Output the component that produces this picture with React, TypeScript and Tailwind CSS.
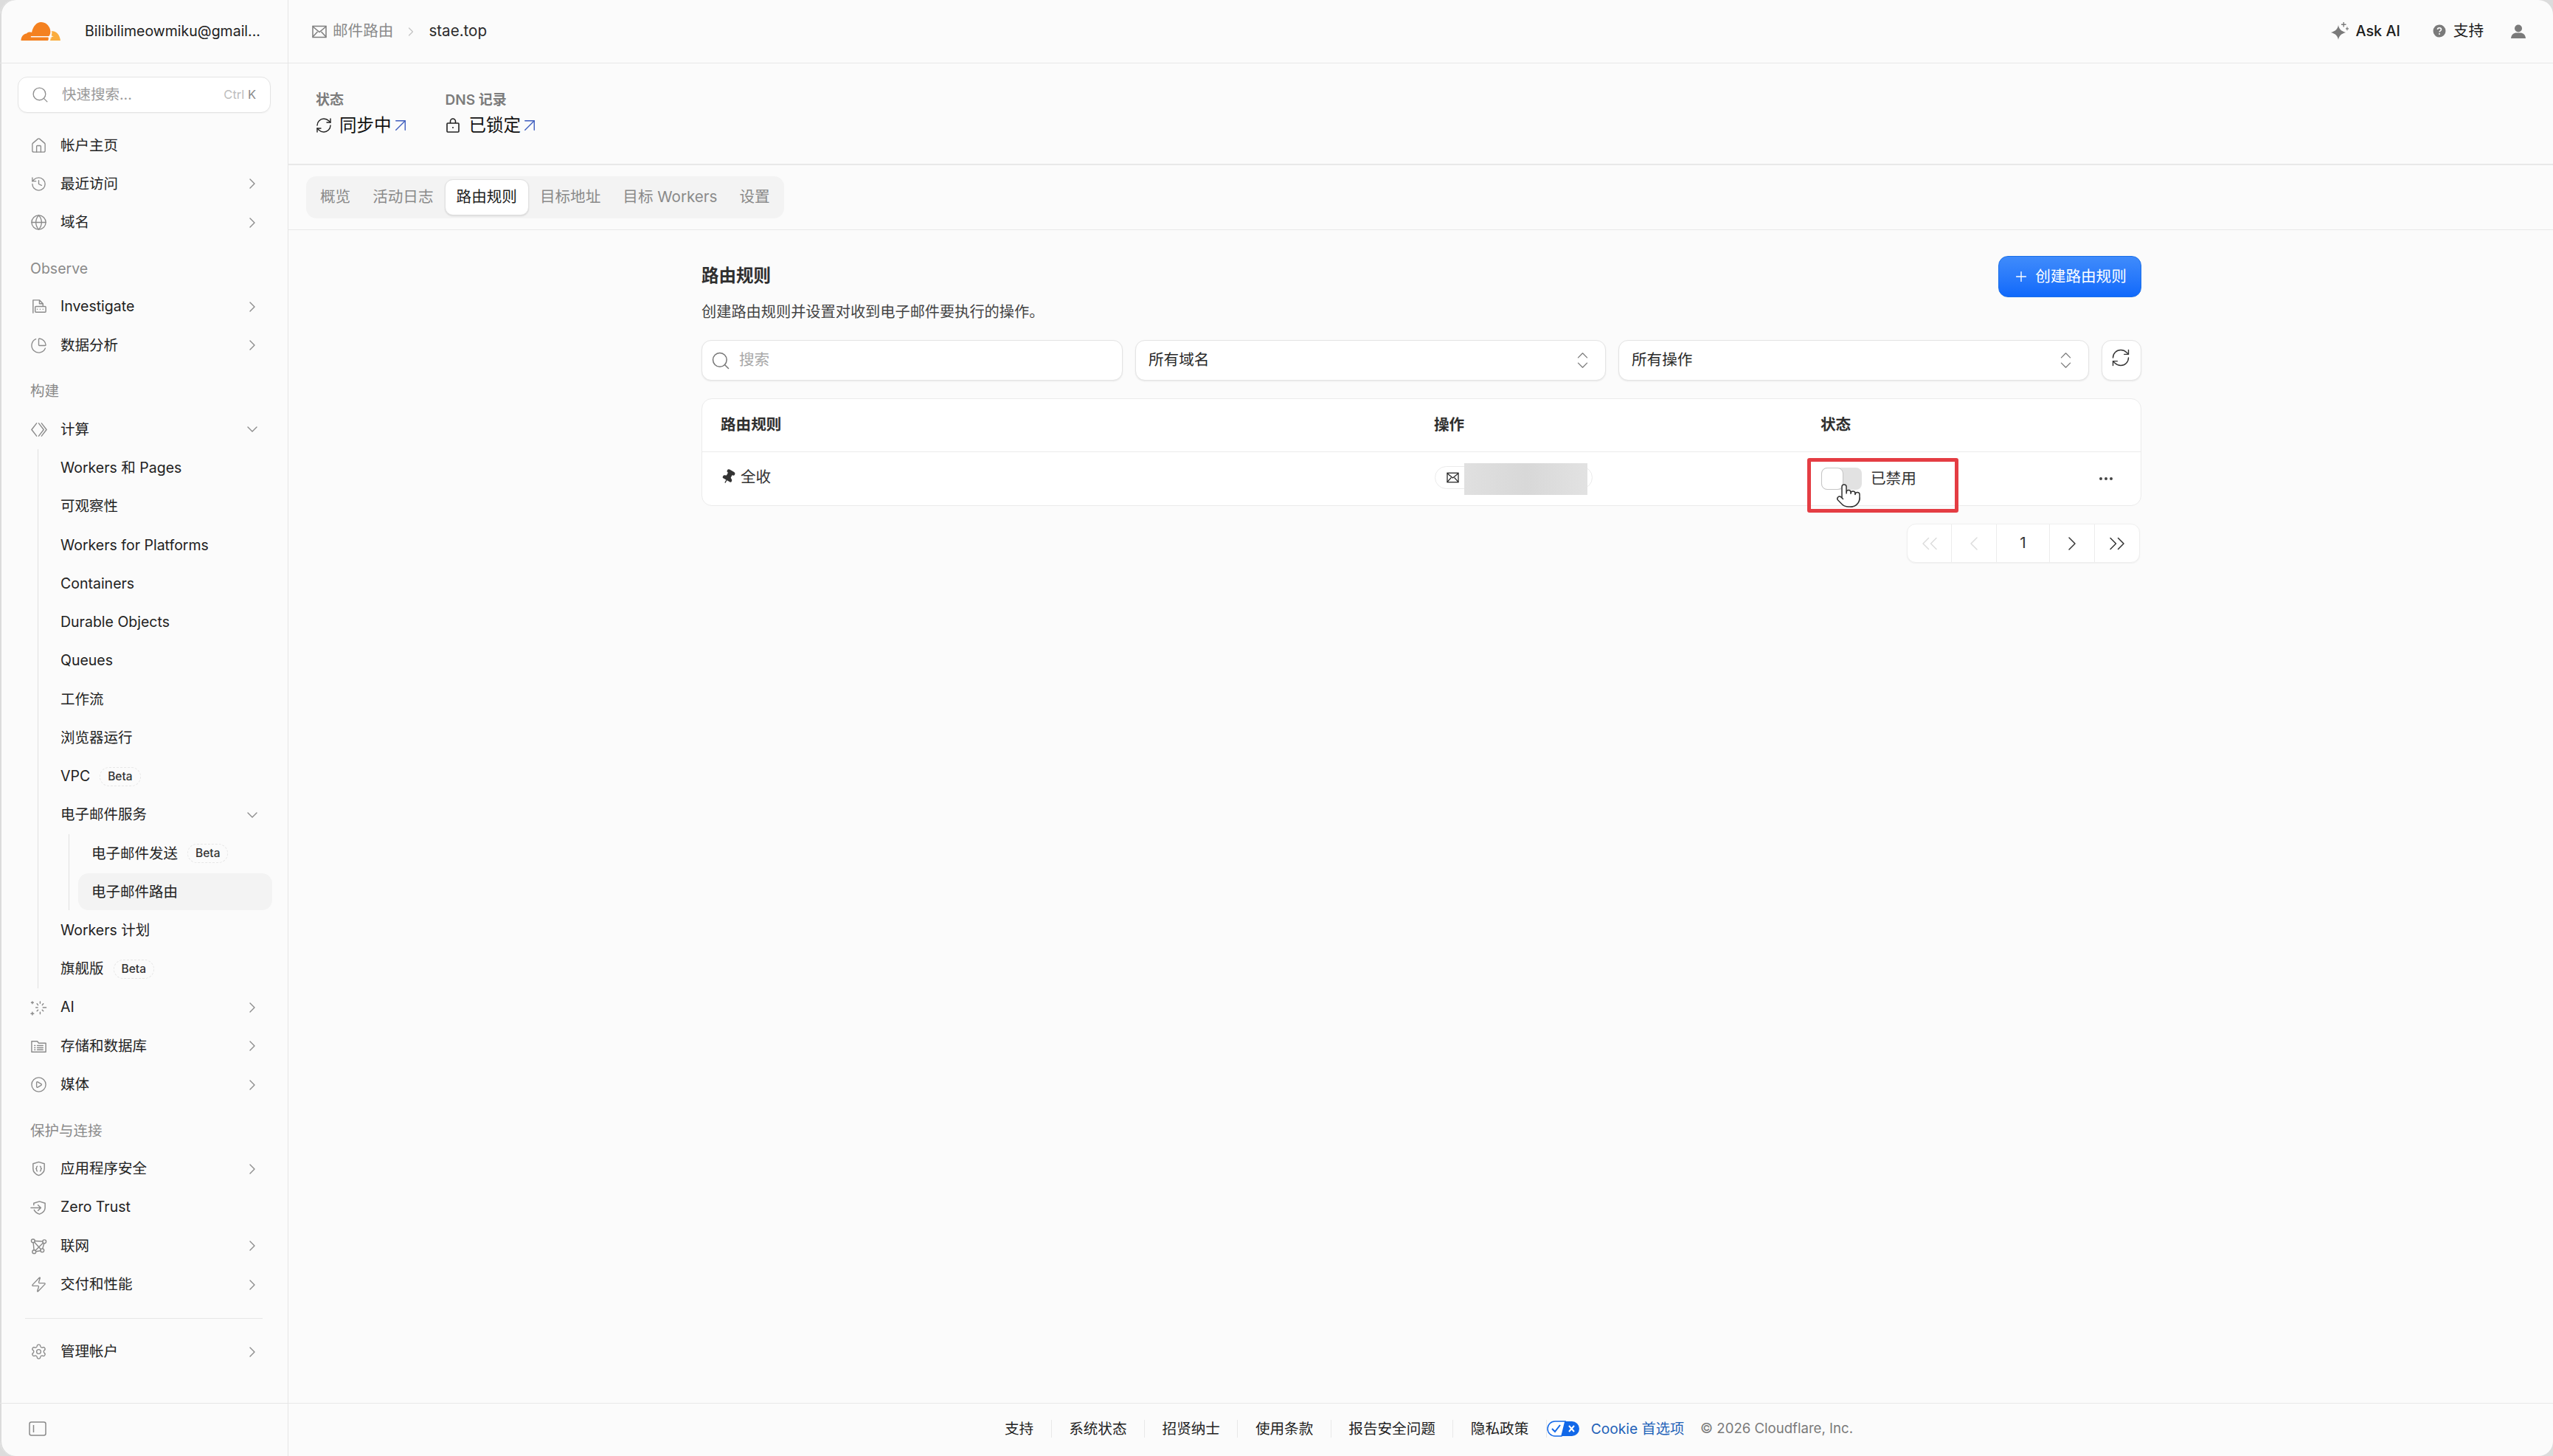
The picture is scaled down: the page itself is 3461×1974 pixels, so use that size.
import type { ReactNode } from "react";
import {
  ChevronDown,
  ChevronLeft,
  ChevronRight,
  ChevronsLeft,
  ChevronsRight,
  ChevronsUpDown,
  ChartPie,
  CirclePlay,
  Ellipsis,
  Globe,
  History,
  Home,
  Pin,
  Plus,
  Pointer,
  RefreshCw,
  Search,
  Settings,
  ArrowUpRight,
  Zap,
} from "lucide-react";

type IconProps = { className?: string; strokeWidth?: number };

function Svg({ className, children }: IconProps & { children: ReactNode }) {
  return (
    <svg
      viewBox="0 0 24 24"
      fill="none"
      stroke="currentColor"
      strokeWidth="1.5"
      strokeLinecap="round"
      strokeLinejoin="round"
      className={className}
    >
      {children}
    </svg>
  );
}

const DocIcon = ({ className }: IconProps) => (
  <Svg className={className}>
    <path d="M4 21V3h9l5 5v3M13 3v5h5" />
    <rect x="7" y="12" width="15" height="8" rx="1" />
    <path d="M10 16h.01M14 16h.01M18 16h.01" />
  </Svg>
);
const ComputeIcon = ({ className }: IconProps) => (
  <Svg className={className}>
    <path d="M9 3 2 12l7 9M12 3l7 9-7 9M16 3l7 9-7 9" />
  </Svg>
);
const AiIcon = ({ className }: IconProps) => (
  <Svg className={className}>
    <path d="M3 3v3M1.500 4.500h3M3 18v4M1 20h4M14 3v2.500M14 18v2.500M8 11.500h2.500M18 11.500h4.500M9.500 6l1.500 2M18.500 6 17 8M9.500 16.500 11 15M18.500 16.500 17 15" />
  </Svg>
);
const StorageIcon = ({ className }: IconProps) => (
  <Svg className={className}>
    <path d="M2 5h8l2 2.500h10V20H2z" />
    <path d="M6 11h1M6 14h1M6 17h1M10 11h8M10 14h8M10 17h8" />
  </Svg>
);
const ShieldCodeIcon = ({ className }: IconProps) => (
  <Svg className={className}>
    <path d="M12 2.500 20 5v7c0 5-4 8-8 9.500C8 20 4 17 4 12V5z" />
    <path d="M10 8.500c-1 0-1 1-1 2s-.5 1.500-1 1.500c.5 0 1 .5 1 1.500s0 2 1 2M14 8.500c1 0 1 1 1 2s.5 1.500 1 1.500c-.5 0-1 .5-1 1.500s0 2-1 2" />
  </Svg>
);
const ShieldArrowIcon = ({ className }: IconProps) => (
  <Svg className={className}>
    <path d="M5 8V5.500L13 3l8 2.500V12c0 5-4 7.500-8 9-3-1-6-3-7.500-6" />
    <path d="M1 12h14M11 8l4 4-4 4" />
  </Svg>
);
const NetworkIcon = ({ className }: IconProps) => (
  <Svg className={className}>
    <circle cx="4" cy="4.500" r="2.500" />
    <circle cx="20" cy="5.500" r="2.500" />
    <circle cx="5.500" cy="20" r="2.500" />
    <circle cx="17" cy="18" r="2.500" />
    <path d="M6.500 4.700 17.500 5.300M4.300 7l1 10.500M19.500 8 17.500 15.500M8 19.500l6.500-1M6 6.500l9 10M18 7.500 7.500 18" />
  </Svg>
);
const CollapseIcon = ({ className }: IconProps) => (
  <svg viewBox="0 0 24 20" fill="none" stroke="currentColor" strokeWidth="1.500" className={className}>
    <rect x="1" y="1" width="22" height="18" rx="2.500" />
    <path d="M6.500 5v10" />
  </svg>
);
const MailIcon = ({ className }: IconProps) => (
  <svg viewBox="0 0 20 18" fill="none" stroke="currentColor" strokeWidth="1.500" className={className}>
    <rect x="1" y="1.500" width="18" height="15" />
    <path d="m1 2 9 7.500L19 2M1 16l6.500-7M19 16l-6.500-7" />
  </svg>
);
const LockIcon = ({ className }: IconProps) => (
  <svg viewBox="0 0 18 20" fill="none" stroke="currentColor" strokeWidth="1.600" className={className}>
    <rect x="1" y="7" width="16" height="12" rx="1" />
    <path d="M5.500 7V4.500a3.500 3.500 0 0 1 7 0V7" />
    <circle cx="9" cy="13" r="1" fill="currentColor" stroke="none" />
  </svg>
);
const SparkIcon = ({ className }: IconProps) => (
  <svg viewBox="0 0 24 24" fill="currentColor" className={className}>
    <path d="M10 4C11 9.500 13.500 12 20 14 13.500 16 11 18.500 10 24 9 18.500 6.500 16 0 14 6.500 12 9 9.500 10 4z" />
    <path d="M16.500 0h1.400v2.600h2.600V4h-2.600v2.600h-1.400V4H14V2.600h2.500zM21.400 6.500h1.100v1.800H24v1.100h-1.500v1.800h-1.100V9.400H20V8.300h1.400z" />
  </svg>
);
const HelpIcon = ({ className }: IconProps) => (
  <svg viewBox="0 0 18 18" className={className}>
    <circle cx="9" cy="9" r="8.500" fill="currentColor" />
    <path d="M6.500 7c0-1.500 1.100-2.300 2.500-2.300S11.500 5.500 11.500 7c0 1.800-2.500 1.800-2.500 3.500" fill="none" stroke="#fff" strokeWidth="1.600" />
    <circle cx="9" cy="13" r="1" fill="#fff" />
  </svg>
);
const UserIcon = ({ className }: IconProps) => (
  <svg viewBox="0 0 20 19" fill="currentColor" className={className}>
    <circle cx="10" cy="5.500" r="5" />
    <path d="M0 19c.5-5 3.500-7 6.500-7.500h7c3 .5 6 2.500 6.500 7.500z" />
  </svg>
);

function CloudflareLogo() {
  return (
    <svg viewBox="0 0 54 25" className="h-[25px] w-[54px] shrink-0">
      <path
        fill="#f48120"
        d="M.5 25C.5 20 3.500 16 8 15.500c1.500-2 4.500-2.500 7-1.500C17 5 22 0 27.500 0 33.500 0 38.500 4 40 10c1 4 0 7-1.500 9H14q-.5 1 0 1.500h23.500q1 2.500-.5 4.500z"
      />
      <path fill="#faad3f" d="M40 25q1-3 .5-4.500L42 17q1-4-.5-4.500C47 11 53 16 54 25z" />
      <path fill="#fff" d="m41 15.500.8 3 3 .7-3 .8-.8 3-.8-3-3-.8 3-.7z" />
    </svg>
  );
}

function NavRow({
  icon: Icon,
  label,
  arrow,
  children,
}: {
  icon?: (p: IconProps) => ReactNode;
  label: string;
  arrow?: "right" | "down";
  children?: ReactNode;
}) {
  return (
    <div className={`flex h-[52.25px] items-center text-[19.5px] text-[#222] ${Icon ? "pl-[40px]" : ""} pr-[36px]`}>
      {Icon && (
        <span className="mr-[18px] flex w-[24px] shrink-0 justify-center text-[#8b8b8b]">
          <Icon strokeWidth={1.4} className="h-[23px] w-[23px]" />
        </span>
      )}
      <span>{label}</span>
      {children}
      {arrow === "right" && <ChevronRight strokeWidth={1.4} className="ml-auto h-[24px] w-[24px] text-[#8b8b8b]" />}
      {arrow === "down" && <ChevronDown strokeWidth={1.4} className="ml-auto h-[24px] w-[24px] text-[#8b8b8b]" />}
    </div>
  );
}

function Beta() {
  return (
    <span className="ml-[13px] rounded-full border border-dashed border-[#e6e6e6] px-[10px] text-[15.5px] leading-[24px] font-medium text-[#333]">
      Beta
    </span>
  );
}

function SectionLabel({ children }: { children: string }) {
  return <div className="flex h-[62px] items-end pb-[14px] pl-[41px] text-[19.5px] leading-[24px] text-[#8a8a8a]">{children}</div>;
}

function Sidebar() {
  return (
    <aside className="flex w-[391px] shrink-0 flex-col border-r border-[#e6e6e6]">
      <div className="flex h-[86px] shrink-0 items-center border-b border-[#e6e6e6] pl-[28px]">
        <CloudflareLogo />
        <span className="ml-[33px] text-[19.5px] whitespace-nowrap text-[#222]">Bilibilimeowmiku@gmail...</span>
      </div>
      <div className="mt-[18px] mr-[23px] ml-[24px] flex h-[49px] shrink-0 items-center rounded-[13px] border border-[#e4e4e4] bg-white pr-[19px] pl-[17px] shadow-[0_1px_2px_rgba(0,0,0,0.04)]">
        <Search strokeWidth={1.3} className="h-[25px] w-[25px] text-[#8f8f8f]" />
        <span className="ml-[17px] text-[19.5px] text-[#9a9a9a]">快速搜索...</span>
        <span className="ml-auto text-[16.5px] text-[#bdbdbd]">
          Ctrl <span className="text-[#8a8a8a]">K</span>
        </span>
      </div>
      <nav className="mt-[18px]">
        <NavRow icon={Home} label="帐户主页" />
        <NavRow icon={History} label="最近访问" arrow="right" />
        <NavRow icon={Globe} label="域名" arrow="right" />
        <SectionLabel>Observe</SectionLabel>
        <NavRow icon={DocIcon} label="Investigate" arrow="right" />
        <NavRow icon={ChartPie} label="数据分析" arrow="right" />
        <SectionLabel>构建</SectionLabel>
        <NavRow icon={ComputeIcon} label="计算" arrow="down" />
        <div className="ml-[51px] border-l border-[#e0e0e0] pl-[30px]">
          <NavRow label="Workers 和 Pages" />
          <NavRow label="可观察性" />
          <NavRow label="Workers for Platforms" />
          <NavRow label="Containers" />
          <NavRow label="Durable Objects" />
          <NavRow label="Queues" />
          <NavRow label="工作流" />
          <NavRow label="浏览器运行" />
          <NavRow label="VPC">
            <Beta />
          </NavRow>
          <NavRow label="电子邮件服务" arrow="down" />
          <div className="mr-[21px] ml-[11px] border-l border-[#e0e0e0] pl-[12px]">
            <div className="flex h-[52.25px] items-center pl-[18px] text-[19.5px] text-[#222]">
              电子邮件发送
              <Beta />
            </div>
            <div className="my-[1.1px] flex h-[50px] items-center rounded-[14px] bg-[#f3f3f3] pl-[18px] text-[19.5px] text-[#222]">
              电子邮件路由
            </div>
          </div>
          <NavRow label="Workers 计划" />
          <NavRow label="旗舰版">
            <Beta />
          </NavRow>
        </div>
        <NavRow icon={AiIcon} label="AI" arrow="right" />
        <NavRow icon={StorageIcon} label="存储和数据库" arrow="right" />
        <NavRow icon={CirclePlay} label="媒体" arrow="right" />
        <SectionLabel>保护与连接</SectionLabel>
        <NavRow icon={ShieldCodeIcon} label="应用程序安全" arrow="right" />
        <NavRow icon={ShieldArrowIcon} label="Zero Trust" />
        <NavRow icon={NetworkIcon} label="联网" arrow="right" />
        <NavRow icon={Zap} label="交付和性能" arrow="right" />
      </nav>
      <div className="mx-[34px] mt-[19px] mb-[19px] border-t border-[#e6e6e6]" />
      <NavRow icon={Settings} label="管理帐户" arrow="right" />
      <div className="mt-auto flex h-[72px] items-center border-t border-[#e6e6e6] pb-[3px] pl-[39px] text-[#8a8a8a]">
        <CollapseIcon className="h-[20px] w-[24px]" />
      </div>
    </aside>
  );
}

function TopBar() {
  return (
    <header className="flex h-[86px] shrink-0 items-center border-b border-[#e8e8e8] pr-[37px] pl-[32px] text-[20.6px]">
      <MailIcon className="h-[18px] w-[20px] text-[#7d7d7d]" />
      <span className="ml-[8px] text-[#8a8a8a]">邮件路由</span>
      <ChevronRight strokeWidth={1.5} className="mx-[14px] h-[20px] w-[20px] text-[#c4c4c4]" />
      <span className="text-[#2a2a2a]">stae.top</span>
      <div className="ml-auto flex items-center text-[#1d1d1d]">
        <SparkIcon className="h-[24px] w-[24px] text-[#7a7a7a]" />
        <span className="ml-[9px] text-[19.8px] font-medium">Ask AI</span>
        <HelpIcon className="ml-[44px] h-[18px] w-[18px] text-[#7a7a7a]" />
        <span className="ml-[10px]">支持</span>
        <UserIcon className="ml-[37px] h-[19px] w-[20px] text-[#7a7a7a]" />
      </div>
    </header>
  );
}

function Stat({ label, value, icon }: { label: string; value: string; icon: ReactNode }) {
  return (
    <div>
      <div className="text-[19px] leading-[28px] font-semibold text-[#7c7c7c]">{label}</div>
      <div className="mt-[4px] flex h-[32px] items-center text-[23.5px] text-[#111]">
        {icon}
        <span>{value}</span>
        <ArrowUpRight strokeWidth={1.1} className="ml-[-3px] h-[30px] w-[30px] text-[#3b5bbd]" />
      </div>
    </div>
  );
}

const tabs = ["概览", "活动日志", "路由规则", "目标地址", "目标 Workers", "设置"];

function Tabs() {
  return (
    <div className="flex h-[88px] shrink-0 items-center border-b border-[#e8e8e8] pl-[24px]">
      <div className="flex h-[57px] items-center rounded-[14px] bg-[#f3f3f3] px-[4px] text-[20.6px]">
        {tabs.map((t) =>
          t === "路由规则" ? (
            <span
              key={t}
              className="flex h-[49px] items-center rounded-[11px] border border-[#e2e2e2] bg-white px-[15px] text-[#1d1d1d] shadow-[0_1px_2px_rgba(0,0,0,0.12)]"
            >
              {t}
            </span>
          ) : (
            <span key={t} className="px-[15px] text-[#8a8a8a]">
              {t}
            </span>
          ),
        )}
      </div>
    </div>
  );
}

function Select({ label }: { label: string }) {
  return (
    <div className="flex flex-1 items-center justify-between rounded-[13px] border border-[#e4e4e4] bg-white pr-[16px] pl-[17px] text-[20.6px] text-[#2a2a2a] shadow-[0_1px_2px_rgba(0,0,0,0.08)]">
      {label}
      <ChevronsUpDown strokeWidth={1.1} className="h-[29px] w-[29px] text-[#7d7d7d]" />
    </div>
  );
}

function RulesTable() {
  return (
    <div className="mt-[24px] rounded-[14px] border border-[#ebebeb] bg-white text-[20.6px]">
      <div className="grid h-[72px] grid-cols-[967px_524px_1fr] items-center border-b border-[#ebebeb] font-semibold text-[#2f2f2f]">
        <span className="pl-[25px]">路由规则</span>
        <span className="pl-[25px]">操作</span>
        <span className="pl-[25px]">状态</span>
      </div>
      <div className="grid h-[72px] grid-cols-[967px_524px_1fr] items-center text-[#333]">
        <div className="mb-[4px] flex items-center pl-[25px]">
          <Pin strokeWidth={1.5} className="h-[21px] w-[21px] rotate-[30deg] fill-[#333] text-[#333]" />
          <span className="ml-[6px]">全收</span>
        </div>
        <div className="relative mb-[4px] ml-[26px] flex h-[31px] w-[214px] items-center rounded-full border border-[#ebebeb] pl-[15px]">
          <MailIcon className="h-[15px] w-[17px] text-[#222]" />
          <span className="absolute top-[-5px] left-[39px] h-[43px] w-[167px] bg-gradient-to-r from-[#e0e0e0] via-[#d8d8d8] to-[#e2e2e2]" />
        </div>
        <div className="relative flex items-center pl-[26px]">
          <span className="absolute top-[-13px] left-[7px] h-[74px] w-[205px] rounded-[3px] border-[5px] border-[#e43d43]" />
          <span className="flex h-[30px] w-[55px] rounded-[8px] bg-[#e2e2e2]">
            <span className="h-[30px] w-[30px] rounded-[8px] border border-[#c4c4c4] bg-white" />
          </span>
          <span className="ml-[12px]">已禁用</span>
          <Pointer strokeWidth={1} className="absolute top-[20px] left-[45px] h-[36px] w-[36px] fill-white text-[#333]" />
          <Ellipsis className="absolute top-[3px] right-[35px] h-[24px] w-[24px] text-[#444]" />
        </div>
      </div>
    </div>
  );
}

function Pagination() {
  const cell = "flex items-center justify-center border-r border-[#ececec] last:border-r-0";
  return (
    <div className="mt-[24px] flex justify-end pr-[2px]">
      <div className="flex h-[53px] rounded-[12px] border border-[#efefef] bg-white text-[20.6px] text-[#333] shadow-[0_1px_2px_rgba(0,0,0,0.05)]">
        <span className={`${cell} w-[60px]`}>
          <ChevronsLeft strokeWidth={1} className="h-[36px] w-[36px] text-[#dcdcdc]" />
        </span>
        <span className={`${cell} w-[61px]`}>
          <ChevronLeft strokeWidth={1.1} className="h-[32px] w-[32px] text-[#dcdcdc]" />
        </span>
        <span className={`${cell} w-[72px]`}>1</span>
        <span className={`${cell} w-[61px]`}>
          <ChevronRight strokeWidth={1.1} className="h-[32px] w-[32px]" />
        </span>
        <span className={`${cell} w-[60px]`}>
          <ChevronsRight strokeWidth={1} className="h-[36px] w-[36px]" />
        </span>
      </div>
    </div>
  );
}

const footerLinks = ["支持", "系统状态", "招贤纳士", "使用条款", "报告安全问题", "隐私政策"];

function Footer() {
  return (
    <footer className="mt-auto flex h-[72px] shrink-0 items-center justify-center border-t border-[#e8e8e8] pb-[3px] pl-[22px] text-[19.6px] text-[#222]">
      {footerLinks.map((l) => (
        <span key={l} className="border-r border-[#e8e8e8] px-[23.5px] leading-[24px] first:pl-0 last:border-r-0 last:pr-[22px]">
          {l}
        </span>
      ))}
      <svg viewBox="0 0 47 22" className="h-[22px] w-[47px] shrink-0">
        <path d="M11 1h23a10 10 0 0 1 0 20H20l5-20z" fill="#1268e8" />
        <path d="M25 1H11a10 10 0 0 0 0 20h9z" fill="#fff" stroke="#1268e8" strokeWidth="1.500" />
        <path d="m7 11 4 4 7-9" fill="none" stroke="#1268e8" strokeWidth="2" />
        <path d="m30 7 7 8M37 7l-7 8" stroke="#fff" strokeWidth="2" />
      </svg>
      <span className="ml-[13px] text-[19.2px] text-[#1f62b8]">Cookie 首选项</span>
      <span className="ml-[22px] text-[18.6px] text-[#7a7a7a]">© 2026 Cloudflare, Inc.</span>
    </footer>
  );
}

export default function App() {
  return (
    <div className="h-[1974px] bg-[#dcdcdc] font-[Inter,'Noto_Sans_CJK_SC',sans-serif]">
      <div className="flex h-full overflow-hidden rounded-[20px] bg-[#fbfbfb] shadow-[inset_2px_0_0_#dcdcdc]">
        <Sidebar />
        <main className="flex min-w-0 flex-1 flex-col">
          <TopBar />
          <div className="flex h-[138px] shrink-0 items-center gap-[46px] border-b-2 border-[#e8e8e8] pl-[37px]">
            <Stat
              label="状态"
              value="同步中"
              icon={<RefreshCw strokeWidth={1.4} className="mr-[9px] ml-[-1px] h-[24px] w-[24px] text-[#222]" />}
            />
            <Stat label="DNS 记录" value="已锁定" icon={<LockIcon className="mr-[13px] ml-[1px] h-[20px] w-[18px] text-[#222]" />} />
          </div>
          <Tabs />
          <section className="ml-[560px] w-[1952px] pt-[35px]">
            <div className="flex h-[114px] items-start justify-between">
              <div className="pt-[11px]">
                <h1 className="text-[23.5px] leading-[32px] font-semibold text-[#2f2f2f]">路由规则</h1>
                <p className="mt-[19px] text-[20.2px] leading-[28px] text-[#444]">创建路由规则并设置对收到电子邮件要执行的操作。</p>
              </div>
              <button className="flex h-[56px] w-[194px] items-center justify-center gap-[8px] rounded-[13px] border border-[#1a6fe8] bg-gradient-to-b from-[#3f8bfb] to-[#0f69fb] text-[20.6px] text-white">
                <Plus strokeWidth={1.5} className="h-[22px] w-[22px]" />
                创建路由规则
              </button>
            </div>
            <div className="flex h-[55px] gap-[17px]">
              <div className="flex w-[571px] shrink-0 items-center rounded-[13px] border border-[#e4e4e4] bg-white pl-[11px] text-[20.6px] text-[#a8a8a8] shadow-[0_1px_2px_rgba(0,0,0,0.08)]">
                <Search strokeWidth={1.3} className="h-[28px] w-[28px] text-[#777]" />
                <span className="ml-[11px]">搜索</span>
              </div>
              <Select label="所有域名" />
              <Select label="所有操作" />
              <div className="flex w-[54px] shrink-0 items-start justify-center rounded-[13px] border border-[#e4e4e4] bg-white pt-[9px] pr-[2px] shadow-[0_1px_2px_rgba(0,0,0,0.08)]">
                <RefreshCw strokeWidth={1.2} className="h-[28px] w-[28px] text-[#333]" />
              </div>
            </div>
            <RulesTable />
            <Pagination />
          </section>
          <Footer />
        </main>
      </div>
    </div>
  );
}
